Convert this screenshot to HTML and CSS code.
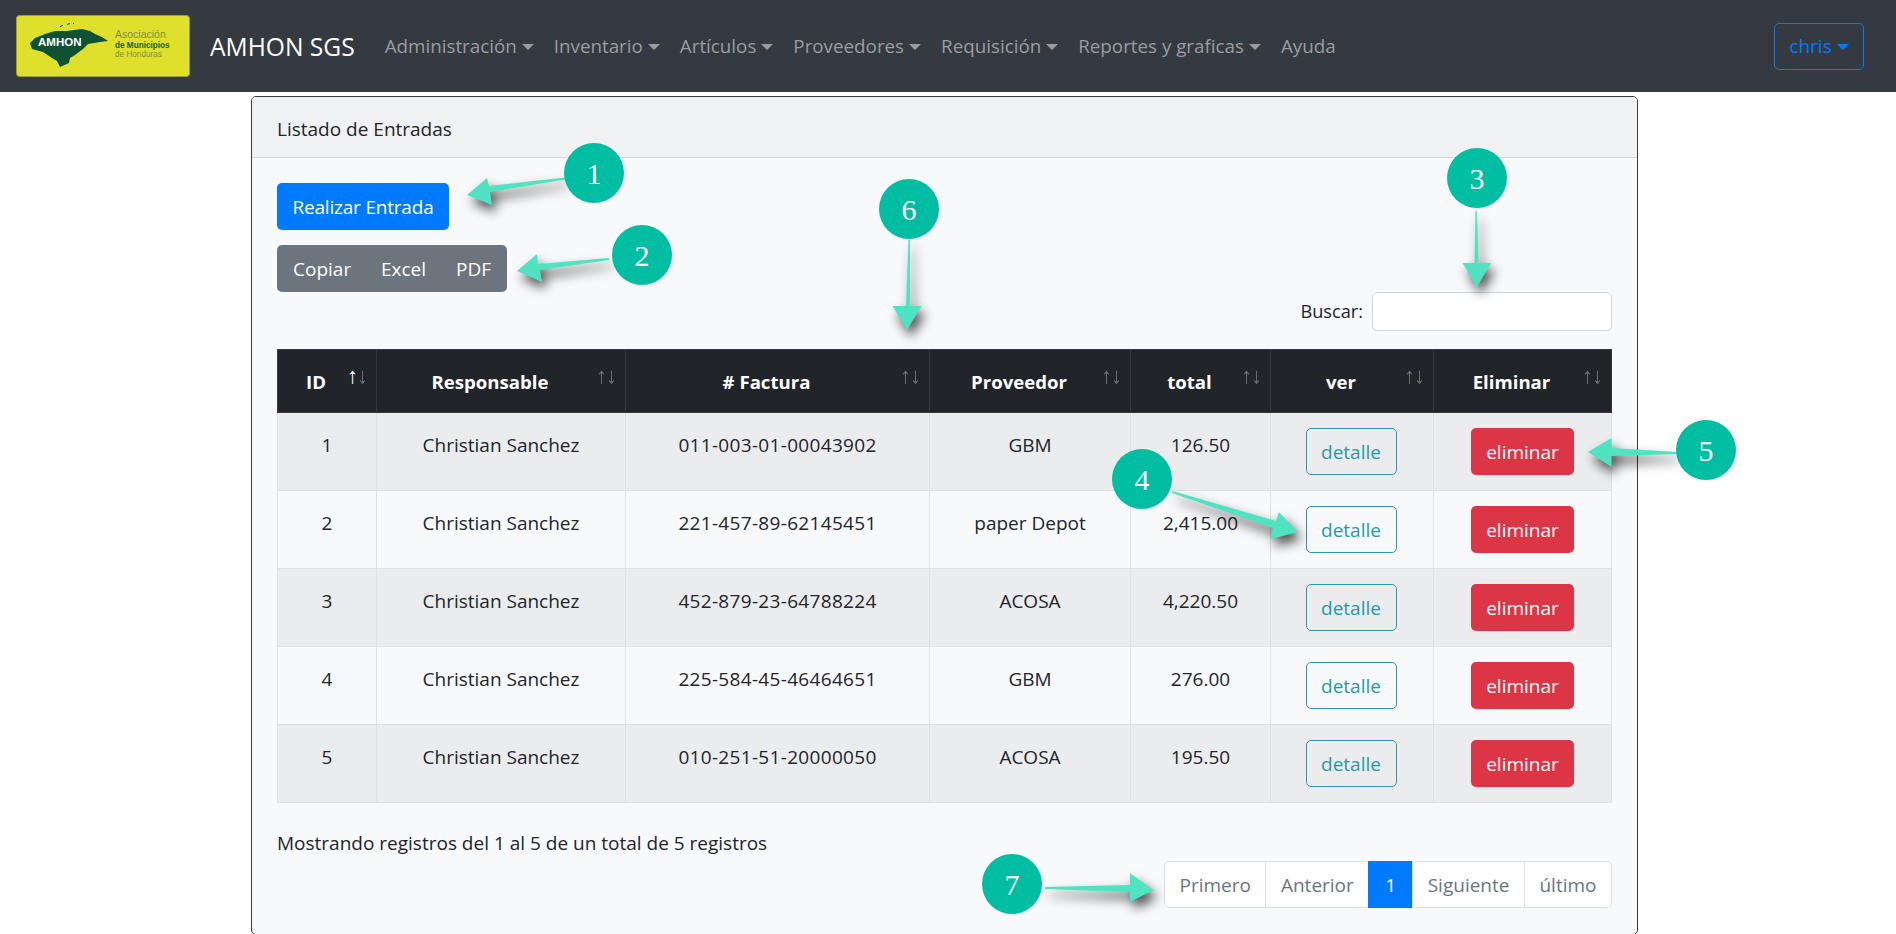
FILE: index.html
```html
<!DOCTYPE html>
<html lang="es">
<head>
<meta charset="utf-8">
<title>AMHON SGS</title>
<link rel="stylesheet" href="styles.css">
</head>
<body>
<nav class="navbar">
  <svg class="logo" viewBox="0 0 174 62" width="174" height="62" aria-label="AMHON">
    <rect class="logo-bg" x="0.5" y="0.5" width="173" height="61" rx="3"/>
    <path class="logo-map" d="M14 28 L19 23 L29 19 L39 16 L51 16 L58 15 L66 14 L74 16 L79 19 L86 22 L92 26 L84 27 L72 29 L67 34 L59 40 L54 43 L53 48 L44 52 L41 46 L36 43 L27 37 L16 34 Z"/>
    <path class="logo-map" d="M44 11 l3 -1 l0 1 l-3 1 Z M51 9 l3 -1 l0 1 l-3 1 Z M57 8 l1 0 l0 1 l-1 0 Z"/>
    <text class="logo-amhon" x="22" y="31">AMHON</text>
    <text class="logo-t logo-a" x="99" y="23">Asociación</text>
    <text class="logo-t logo-b" x="99" y="33">de Municipios</text>
    <text class="logo-t" x="99" y="42">de Honduras</text>
  </svg>
  <a class="brand">AMHON SGS</a>
  <ul class="menu">
    <li class="menu-item caret">Administración</li>
    <li class="menu-item caret">Inventario</li>
    <li class="menu-item caret">Artículos</li>
    <li class="menu-item caret">Proveedores</li>
    <li class="menu-item caret">Requisición</li>
    <li class="menu-item caret">Reportes y graficas</li>
    <li class="menu-item">Ayuda</li>
  </ul>
  <button class="user caret">chris</button>
</nav>

<main class="page">
  <section class="card">
    <header class="card-header">Listado de Entradas</header>
    <div class="card-body">
      <button class="btn btn-primary">Realizar Entrada</button>
      <div class="btn-group">
        <span class="group-item">Copiar</span>
        <span class="group-item">Excel</span>
        <span class="group-item">PDF</span>
      </div>
      <div class="filter">
        <label class="filter-label" for="buscar">Buscar:</label>
        <input class="filter-input" id="buscar" type="search">
      </div>
      <table class="table">
        <colgroup>
          <col class="c1"><col class="c2"><col class="c3"><col class="c4"><col class="c5"><col class="c6"><col class="c7">
        </colgroup>
        <thead>
          <tr>
            <th class="sort-asc">ID</th>
            <th>Responsable</th>
            <th># Factura</th>
            <th>Proveedor</th>
            <th>total</th>
            <th>ver</th>
            <th>Eliminar</th>
          </tr>
        </thead>
        <tbody>
          <tr>
            <td>1</td><td>Christian Sanchez</td><td class="fac">011-003-01-00043902</td><td>GBM</td><td>126.50</td>
            <td class="act"><button class="btn btn-info">detalle</button></td>
            <td class="act"><button class="btn btn-danger">eliminar</button></td>
          </tr>
          <tr>
            <td>2</td><td>Christian Sanchez</td><td class="fac">221-457-89-62145451</td><td>paper Depot</td><td>2,415.00</td>
            <td class="act"><button class="btn btn-info">detalle</button></td>
            <td class="act"><button class="btn btn-danger">eliminar</button></td>
          </tr>
          <tr>
            <td>3</td><td>Christian Sanchez</td><td class="fac">452-879-23-64788224</td><td>ACOSA</td><td>4,220.50</td>
            <td class="act"><button class="btn btn-info">detalle</button></td>
            <td class="act"><button class="btn btn-danger">eliminar</button></td>
          </tr>
          <tr>
            <td>4</td><td>Christian Sanchez</td><td class="fac">225-584-45-46464651</td><td>GBM</td><td>276.00</td>
            <td class="act"><button class="btn btn-info">detalle</button></td>
            <td class="act"><button class="btn btn-danger">eliminar</button></td>
          </tr>
          <tr>
            <td>5</td><td>Christian Sanchez</td><td class="fac">010-251-51-20000050</td><td>ACOSA</td><td>195.50</td>
            <td class="act"><button class="btn btn-info">detalle</button></td>
            <td class="act"><button class="btn btn-danger">eliminar</button></td>
          </tr>
        </tbody>
      </table>
      <p class="info">Mostrando registros del 1 al 5 de un total de 5 registros</p>
      <ul class="pagination">
        <li class="page-link">Primero</li>
        <li class="page-link">Anterior</li>
        <li class="page-link active">1</li>
        <li class="page-link">Siguiente</li>
        <li class="page-link">último</li>
      </ul>
    </div>
  </section>
</main>

<svg class="annot" viewBox="0 0 1896 934" width="1896" height="934">
  <g class="arrows">
    <polygon points="565,177.5 489,186 487,178 467,195 492,205 490,192 565,179.5"/>
    <polygon points="609,258 538,264 537,254 517,271 542,282 540,270 609,260"/>
    <polygon points="1475.5,211 1474.5,263 1462.5,263 1477,287 1491,263 1478.5,263 1477,211"/>
    <polygon points="908.5,239 906,306 892.5,306 907,330 921.5,306 910,306 910,239"/>
    <polygon points="1172.5,491 1276,521 1279,512 1298,532 1270.5,539 1273,528 1172,493"/>
    <polygon points="1677,452 1611.6,448 1611.6,438 1588,452 1611.6,467 1611.6,456 1677,454"/>
    <polygon points="1045,887 1130,885 1130,873 1153.5,890 1130,902 1130,892 1045,889"/>
  </g>
  <g class="badges">
    <circle cx="594" cy="173" r="30"/><text x="594" y="184">1</text>
    <circle cx="642" cy="255" r="30"/><text x="642" y="266">2</text>
    <circle cx="1477" cy="178" r="30"/><text x="1477" y="189">3</text>
    <circle cx="1142" cy="479" r="30"/><text x="1142" y="490">4</text>
    <circle cx="1706" cy="450" r="30"/><text x="1706" y="461">5</text>
    <circle cx="909" cy="209" r="30"/><text x="909" y="220">6</text>
    <circle cx="1012" cy="884" r="30"/><text x="1012" y="895">7</text>
  </g>
</svg>
</body>
</html>
```

FILE: styles.css
```css
* { box-sizing: border-box; }
html, body { margin: 0; padding: 0; height: 934px; overflow: hidden; background: #fff; }
body {
  position: relative;
  font-family: "Open Sans", "Noto Sans", sans-serif;
  font-size: 19px;
  line-height: 29px;
  color: #212529;
}

/* navbar */
.navbar {
  display: flex;
  align-items: center;
  height: 92px;
  padding: 0 32px 0 16px;
  background: #343a40;
}
.logo { flex: none; display: block; }
.logo-bg { fill: #dfe02b; stroke: #9da12c; }
.logo-map { fill: #0e5233; }
.logo-amhon { font: bold 11.5px "Liberation Sans", sans-serif; fill: #fff; }
.logo-t { font: 8.2px "Liberation Sans", sans-serif; fill: #7f8f38; }
.logo-a { font-size: 10.5px; }
.logo-b { font-weight: bold; fill: #1c5a33; }
.brand { margin-left: 20px; font-size: 24.6px; color: #fff; white-space: nowrap; }
.menu { display: flex; margin: 0 0 0 30px; padding: 0; list-style: none; flex: 1; font-size: 18.8px; }
.menu-item { margin-right: 20px; color: #9a9da0; white-space: nowrap; }
.caret::after {
  content: "";
  display: inline-block;
  margin-left: 5px;
  vertical-align: 3px;
  border-top: 6px solid currentColor;
  border-left: 6px solid transparent;
  border-right: 6px solid transparent;
}
.user {
  width: 90px;
  height: 47px;
  padding: 0;
  font: inherit;
  color: #007bff;
  background: transparent;
  border: 1px solid #007bff;
  border-radius: 5px;
}

/* card */
.page { padding: 4px 0 0 251px; }
.card {
  width: 1387px;
  height: 839px;
  border: 1px solid #343a40;
  border-radius: 5px;
  background: #f8f9fa;
  overflow: hidden;
}
.card-header {
  height: 61px;
  padding: 18px 25px 0;
  background: #f0f1f2;
  border-bottom: 1px solid #d5d6d8;
}
.card-body { padding: 25px 25px 0; }

/* buttons */
.btn {
  display: inline-block;
  height: 47px;
  padding: 2px 15px 0;
  font: inherit;
  border: 1px solid transparent;
  border-radius: 5px;
  white-space: nowrap;
}
.btn-primary { display: block; width: 172px; padding: 2px 0 0; letter-spacing: -.2px; color: #fff; background: #007bff; }
.btn-info { width: 91px; margin-right: 2px; padding: 2px 0 0; color: #1f9aad; background: transparent; border-color: #2f98a8; }
.btn-danger { width: 103px; padding: 2px 0 0; color: #fff; background: #dc3545; }
.btn-group {
  display: flex;
  width: 230px;
  height: 47px;
  margin-top: 15px;
  padding: 2px 16px 0;
  justify-content: space-between;
  align-items: center;
  color: #fff;
  background: #6c757d;
  border-radius: 5px;
}

/* search */
.filter { display: flex; justify-content: flex-end; align-items: center; gap: 9px; height: 39px; }
.filter-label { font-size: 18.2px; }
.filter-input {
  width: 240px;
  height: 39px;
  background: #fff;
  border: 1px solid #ced4da;
  border-radius: 5px;
}

/* table */
.table {
  width: 1334px;
  margin-top: 18px;
  table-layout: fixed;
  border-collapse: collapse;
}
.c1 { width: 99px; }
.c2 { width: 249px; }
.c3 { width: 304px; }
.c4 { width: 201px; }
.c5 { width: 140px; }
.c6 { width: 163px; }
.c7 { width: 178px; }
th {
  position: relative;
  height: 63px;
  padding: 0 36px 0 14px;
  font-size: 18.6px;
  font-weight: 700;
  text-align: center;
  color: #fff;
  background: #212529;
  border: 1px solid #32383e;
}
th::before, th::after {
  position: absolute;
  top: 11px;
  opacity: .35;
  font: 400 22px/29px "Liberation Sans", sans-serif;
}
th::before { content: "\2191"; right: 18px; }
th::after { content: "\2193"; right: 8px; }
.sort-asc::before { opacity: 1; }
td {
  height: 78px;
  padding: 18px 8px 0;
  text-align: center;
  vertical-align: top;
  border: 1px solid #dee2e6;
}
td.act { padding-top: 15px; }
td.fac { letter-spacing: .32px; }
tbody tr:nth-child(odd) { background: #ebecee; }

/* footer */
.info { margin: 26px 0 3px; }
.pagination {
  display: flex;
  justify-content: flex-end;
  margin: 0;
  padding: 0;
  list-style: none;
}
.page-link {
  height: 47px;
  padding: 9px 14.5px 0;
  color: #6c757d;
  background: #fff;
  border: 1px solid #dee2e6;
  margin-left: -1px;
}
.page-link:first-child { border-radius: 5px 0 0 5px; }
.page-link:last-child { border-radius: 0 5px 5px 0; }
.page-link.active { padding: 9px 16px 0; color: #fff; background: #007bff; border-color: #007bff; }

/* annotations */
.annot { position: absolute; top: 0; left: 0; pointer-events: none; }
.arrows { fill: #50e3c2; filter: drop-shadow(4px 7px 6px rgba(0, 0, 0, .7)); }
.badges circle { fill: #01bda1; }
.badges text {
  font: 30px "Liberation Serif", serif;
  fill: #fff;
  text-anchor: middle;
}
```
